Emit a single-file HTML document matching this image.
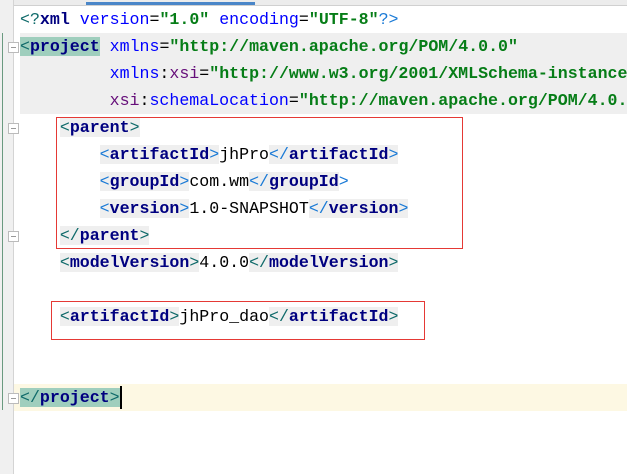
<!DOCTYPE html>
<html><head><meta charset="utf-8"><style>
html,body{margin:0;padding:0;width:627px;height:474px;overflow:hidden;background:#fff;position:relative;font-family:"Liberation Mono",monospace;}
#wrap{position:absolute;left:0;top:0;width:627px;height:474px;overflow:hidden;}
.gut{position:absolute;left:0;top:0;width:13px;height:474px;background:#f0f0f0;}
.gl{position:absolute;left:13px;top:0;width:1px;height:474px;background:#d4d4d4;}
.green{position:absolute;left:2px;top:33px;width:1px;height:377px;background:#6a9a80;}
.topbar{position:absolute;left:0;top:0;width:627px;height:5px;background:#ececec;border-bottom:1px solid #d0d0d0;}
.blue{position:absolute;left:86px;top:2px;width:169px;height:3px;background:#4a86c8;}
.ln{position:absolute;left:20px;width:607px;overflow:hidden;height:27px;line-height:27px;font-size:16.6px;white-space:pre;color:#000;}
.full{position:absolute;left:20px;width:607px;height:27px;background:#efefef;}
.t{color:#000080;font-weight:bold;}
.b{color:#0f6a6a;}
.bb{color:#1a7ad6;}
.a{color:#0000ff;}
.p{color:#660e7a;}
.v{color:#067d17;font-weight:bold;}
.hg{background:#efefef;}
.ht{background:#9fcebd;}
.box{position:absolute;border:1px solid #e53935;}
.fold{position:absolute;left:8px;width:11px;height:11px;border:1px solid #bbb;background:#fff;box-sizing:border-box;}
.fold:after{content:"";position:absolute;left:2px;top:4px;width:5px;height:1px;background:#999;}
</style></head><body><div id="wrap">
<div class="topbar"></div><div class="blue"></div>
<div class="gut"></div><div class="gl"></div><div class="green"></div>
<div class="full" style="top:33px;height:81px;"></div>
<div style="position:absolute;left:14px;top:384px;width:613px;height:27px;background:#fdf8e3;"></div>
<div class="fold" style="top:42px"></div>
<div class="fold" style="top:123px"></div>
<div class="fold" style="top:231px"></div>
<div class="fold" style="top:393px"></div>

<div class="ln" style="top:6px"><span class="b">&lt;?</span><span class="t">xml</span> <span class="a">version</span>=<span class="v">"1.0"</span> <span class="a">encoding</span>=<span class="v">"UTF-8"</span><span class="bb">?&gt;</span></div>
<div class="ln" style="top:33px"><span class="ht"><span class="b">&lt;</span><span class="t">project</span></span> <span class="a">xmlns</span>=<span class="v">"http://maven.apache.org/POM/4.0.0"</span></div>
<div class="ln" style="top:60px">         <span class="a">xmlns</span>:<span class="p">xsi</span>=<span class="v">"http://www.w3.org/2001/XMLSchema-instance"</span></div>
<div class="ln" style="top:87px">         <span class="p">xsi</span>:<span class="a">schemaLocation</span>=<span class="v">"http://maven.apache.org/POM/4.0.0 http</span></div>
<div class="ln" style="top:114px">    <span class="hg"><span class="b">&lt;</span><span class="t">parent</span><span class="b">&gt;</span></span></div>
<div class="ln" style="top:141px">        <span class="hg"><span class="bb">&lt;</span><span class="t">artifactId</span><span class="bb">&gt;</span></span>jhPro<span class="hg"><span class="bb">&lt;/</span><span class="t">artifactId</span><span class="bb">&gt;</span></span></div>
<div class="ln" style="top:168px">        <span class="hg"><span class="bb">&lt;</span><span class="t">groupId</span><span class="bb">&gt;</span></span>com.wm<span class="hg"><span class="bb">&lt;/</span><span class="t">groupId</span></span><span class="bb">&gt;</span></div>
<div class="ln" style="top:195px">        <span class="hg"><span class="bb">&lt;</span><span class="t">version</span><span class="bb">&gt;</span></span>1.0-SNAPSHOT<span class="hg"><span class="bb">&lt;/</span><span class="t">version</span><span class="bb">&gt;</span></span></div>
<div class="ln" style="top:222px">    <span class="hg"><span class="b">&lt;/</span><span class="t">parent</span><span class="b">&gt;</span></span></div>
<div class="ln" style="top:249px">    <span class="hg"><span class="b">&lt;</span><span class="t">modelVersion</span><span class="b">&gt;</span></span>4.0.0<span class="hg"><span class="b">&lt;/</span><span class="t">modelVersion</span><span class="b">&gt;</span></span></div>
<div class="ln" style="top:303px">    <span class="hg"><span class="b">&lt;</span><span class="t">artifactId</span><span class="b">&gt;</span></span>jhPro_dao<span class="hg"><span class="b">&lt;/</span><span class="t">artifactId</span><span class="b">&gt;</span></span></div>
<div class="ln" style="top:384px"><span class="ht"><span class="b">&lt;/</span><span class="t">project</span><span class="b">&gt;</span></span></div>
<div style="position:absolute;left:120px;top:386px;width:2px;height:23px;background:#000;"></div>

<div class="box" style="left:56px;top:117px;width:405px;height:130px;"></div>
<div class="box" style="left:51px;top:301px;width:372px;height:37px;"></div>
</div></body></html>
